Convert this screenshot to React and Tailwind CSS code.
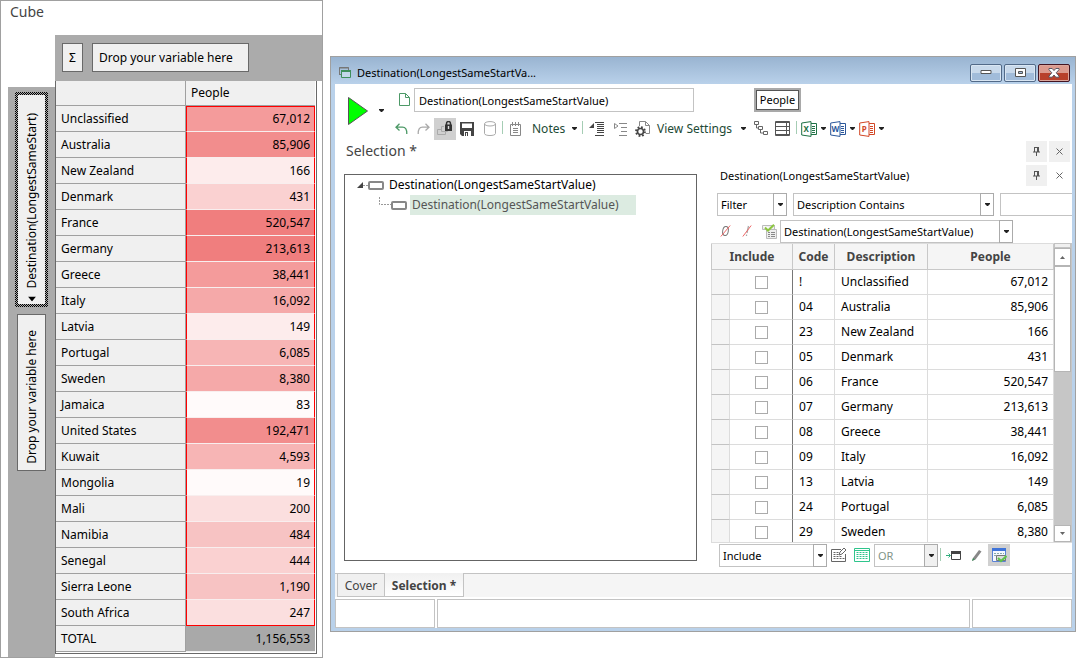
import clsx from "clsx";

const CUBE = [
  ["Unclassified", "67,012", "bg-[#f49b9b]"],
  ["Australia", "85,906", "bg-[#f28d8d]"],
  ["New Zealand", "166", "bg-[#fdecec]"],
  ["Denmark", "431", "bg-[#fad1d1]"],
  ["France", "520,547", "bg-[#f07e7e]"],
  ["Germany", "213,613", "bg-[#f07e7e]"],
  ["Greece", "38,441", "bg-[#f49b9b]"],
  ["Italy", "16,092", "bg-[#f5a9a9]"],
  ["Latvia", "149", "bg-[#fdecec]"],
  ["Portugal", "6,085", "bg-[#f7b5b5]"],
  ["Sweden", "8,380", "bg-[#f5a9a9]"],
  ["Jamaica", "83", "bg-[#fffafa]"],
  ["United States", "192,471", "bg-[#f28d8d]"],
  ["Kuwait", "4,593", "bg-[#f7b5b5]"],
  ["Mongolia", "19", "bg-[#fffafa]"],
  ["Mali", "200", "bg-[#fbdfdf]"],
  ["Namibia", "484", "bg-[#f7c3c3]"],
  ["Senegal", "444", "bg-[#fad1d1]"],
  ["Sierra Leone", "1,190", "bg-[#f7c3c3]"],
  ["South Africa", "247", "bg-[#fbdfdf]"],
];

const CODES = [
  ["!", "Unclassified", "67,012"],
  ["04", "Australia", "85,906"],
  ["23", "New Zealand", "166"],
  ["05", "Denmark", "431"],
  ["06", "France", "520,547"],
  ["07", "Germany", "213,613"],
  ["08", "Greece", "38,441"],
  ["09", "Italy", "16,092"],
  ["13", "Latvia", "149"],
  ["24", "Portugal", "6,085"],
  ["29", "Sweden", "8,380"],
];

export default function App() {
  return (
    <div className="flex min-h-screen items-start gap-[7px] bg-white font-['Noto_Sans','Open_Sans',sans-serif] text-[12px] leading-4 text-black">
      <CubePanel />
      <SelectionWindow />
    </div>
  );
}

function CubePanel() {
  return (
    <section className="flex min-h-screen w-[323px] shrink-0 flex-col border border-[#a0a0a0]">
      <h1 className="h-[34px] px-[9px] pt-px text-[14px] leading-5 text-[#444]">Cube</h1>
      <div className="flex flex-1">
        <div className="flex w-[54px] shrink-0 pt-[52px] pl-[7px]">
          <div className="flex flex-1 flex-col items-start bg-[#ababab] pt-[5px] pl-[7px]">
            <div className="bg-[repeating-conic-gradient(#000_0_25%,#ababab_0_50%)] bg-[size:2px_2px] p-[3px]">
              <button className="flex h-[209px] w-[27px] items-end justify-center bg-[#f0f0f0] pb-0.5">
                <span className="flex rotate-180 items-center gap-2 whitespace-nowrap [writing-mode:vertical-rl]">
                  <svg width="8" height="5" viewBox="0 0 8 5" aria-hidden="true"><path d="M0 5h8L4 0z" /></svg>
                  Destination(LongestSameStart)
                </span>
              </button>
            </div>
            <button className="mt-[7px] ml-0.5 flex h-[157px] w-[29px] items-end justify-center border border-[#696969] bg-[#f0f0f0] pb-[6px]">
              <span className="rotate-180 whitespace-nowrap [writing-mode:vertical-rl]">Drop your variable here</span>
            </button>
          </div>
        </div>
        <div className="flex-1">
          <div className="flex h-[46px] items-start gap-[9px] bg-[#ababab] pt-2 pl-[7px]">
            <button className="h-[29px] w-[21px] border border-[#696969] bg-[#f0f0f0]">Σ</button>
            <button className="h-[29px] w-[157px] border border-[#696969] bg-[#f0f0f0] px-[6px] text-left">Drop your variable here</button>
          </div>
          <div className="mr-[5px] border border-t-0 border-[#696969] pr-px pb-px">
            <table className="w-full table-fixed border-separate border-spacing-0">
              <thead>
                <tr className="h-[25px] bg-[#f0f0f0] text-left">
                  <th className="w-[130px] border-r border-b border-[#a0a0a0]" aria-label="Destination" />
                  <th className="border-b border-[#a0a0a0] px-[5px] font-normal">People</th>
                </tr>
              </thead>
              <tbody>
                {CUBE.map(([name, people, shade], i) => (
                  <tr key={name} className="h-[26px]">
                    <th className="border-r border-b border-[#a0a0a0] bg-[#f0f0f0] px-[5px] text-left font-normal">{name}</th>
                    <td
                      className={clsx(
                        "border-x border-b border-x-[#f00] px-1 text-right",
                        shade,
                        i === 0 && "border-t border-t-[#f00]",
                        i === CUBE.length - 1 ? "border-b-[#f00]" : "border-b-[#f8eeee]"
                      )}
                    >
                      {people}
                    </td>
                  </tr>
                ))}
                <tr className="h-[26px]">
                  <th className="border-r border-b border-[#a0a0a0] bg-[#f0f0f0] px-[5px] text-left font-normal">TOTAL</th>
                  <td className="border-b border-[#f0f0f0] bg-[#a9a9a9] px-[5px] text-right">1,156,553</td>
                </tr>
              </tbody>
            </table>
          </div>
        </div>
      </div>
    </section>
  );
}

function SelectionWindow() {
  return (
    <section className="mt-14 min-w-0 flex-1 border border-[#a0a0a0] bg-[#b9d1ea]">
      <TitleBar />
      <div className="mr-[3px] mb-[3px] ml-1 bg-white">
        <Header />
        <div className="flex h-[23px] items-start justify-between pt-px pr-0.5 pl-[11px]">
          <h2 className="text-[14px] leading-5 text-[#444]">Selection *</h2>
          <div className="flex gap-0.5">
            <PaneButton label="Pin window" filled><PinIcon /></PaneButton>
            <PaneButton label="Close window" filled><CloseIcon /></PaneButton>
          </div>
        </div>
        <div className="flex gap-[14px]">
          <Tree />
          <CodePane />
        </div>
        <nav className="flex border-t border-[#c3c3c3] bg-[#f5f5f5] pl-0.5">
          <button className="h-[23px] w-[48px] border border-t-0 border-[#c3c3c3] bg-[#f0f0f0] pt-px text-[#444]">Cover</button>
          <button className="-mt-px h-6 w-[79px] border border-t-0 border-l-0 border-[#c3c3c3] bg-linear-to-b from-[#f0f0f0] to-white pt-0.5 font-bold text-[#444]">
            Selection *
          </button>
        </nav>
        <footer className="flex gap-0.5 bg-white pt-0.5">
          <div className="h-[29px] w-[100px] border border-[#c3c3c3]" />
          <div className="h-[29px] flex-1 border border-[#c3c3c3]" />
          <div className="h-[29px] w-[100px] border border-[#c3c3c3]" />
        </footer>
      </div>
    </section>
  );
}

function TitleBar() {
  return (
    <header className="flex h-[27px] items-center bg-linear-to-b from-[#99b4d1] to-[#b9d1ea] pt-1 pr-[5px] pl-2">
      <svg width="12" height="11" viewBox="0 0 12 11" fill="none" aria-hidden="true">
        <path d="M.5 7V.5h9V3" stroke="#777" />
        <path d="M0 1h10M0 7.500h2" stroke="#777" />
        <path d="M2.500 3.500h9v7h-9z" stroke="#3f8f5c" fill="#c3d7ea" />
        <path d="M2 4h10" stroke="#3f8f5c" strokeWidth="2" />
      </svg>
      <span className="ml-[6px] flex-1 text-[11px] leading-4">Destination(LongestSameStartVa...</span>
      <div className="flex gap-0.5">
        <button aria-label="Minimize" className="flex h-[18px] w-8 items-center justify-center rounded-[2px] border border-[#526a88] bg-linear-to-b from-[#c8d9eb] from-50% to-[#a1bcda] to-50% shadow-[inset_0_0_0_1px_#d9e6f3]">
          <svg width="12" height="5" viewBox="0 0 12 5"><path d="M1 .5h10v3H1z" fill="#fff" stroke="#555" /></svg>
        </button>
        <button aria-label="Maximize" className="flex h-[18px] w-8 items-center justify-center rounded-[2px] border border-[#526a88] bg-linear-to-b from-[#c8d9eb] from-50% to-[#a1bcda] to-50% shadow-[inset_0_0_0_1px_#d9e6f3]">
          <svg width="11" height="9" viewBox="0 0 11 9" fill="#fff" stroke="#555"><path d="M.5.5h10v8H.5z" /><path d="M3.500 3.500h4v2h-4z" fill="#a1bcda" /></svg>
        </button>
        <button aria-label="Close" className="flex h-[18px] w-8 items-center justify-center rounded-[2px] border border-[#431422] bg-linear-to-b from-[#dc9a8e] from-50% to-[#b8402b] to-50% shadow-[inset_0_0_0_1px_#dba69c]">
          <svg width="12" height="10" viewBox="0 0 12 10">
            <path d="M1 .5h3.200L6 2.600 7.800.5H11v1.200L8.200 4.800 11 8.100v1.100H7.800L6 7 4.200 9.200H1V8.100l2.800-3.300L1 1.700z" fill="#fff" stroke="#4d4d5a" strokeWidth=".9" />
          </svg>
        </button>
      </div>
    </header>
  );
}

function Header() {
  return (
    <div className="flex pt-1">
      <button aria-label="Build" className="flex w-[55px] items-start gap-[10px] pt-2 pl-3">
        <svg width="22" height="30" viewBox="0 0 22 30"><path d="M1.500 1.500v27L20.500 15z" fill="#0f0" stroke="#555" /></svg>
        <span className="pt-[13px]"><Caret /></span>
      </button>
      <div className="min-w-0 flex-1">
        <div className="flex items-start pl-[9px]">
          <svg className="mt-[5px]" width="11" height="13" viewBox="0 0 11 13" fill="none" stroke="#4d9967" aria-hidden="true">
            <path d="M.5.5h6l4 4v8H.5zM6.500.5v4h4" />
          </svg>
          <input
            aria-label="Selection name"
            className="ml-1 h-6 w-[280px] border border-[#c3c3c3] px-1 text-[11px] leading-4"
            defaultValue="Destination(LongestSameStartValue)"
          />
          <div className="ml-[60px] border-2 border-[#a9a9a9]">
            <button className="h-[20px] w-[43px] border border-[#555] bg-white text-[11px] leading-4">People</button>
          </div>
        </div>
        <Toolbar />
      </div>
    </div>
  );
}

function Toolbar() {
  return (
    <div className="mt-[5px] flex h-[23px] items-center text-[#1d4a36]">
      <Tool label="Undo" className="w-[22px]">
        <svg width="13" height="12" viewBox="0 0 13 12" fill="none" stroke="#4d9967" strokeWidth="1.300"><path d="M4.500.8L1 4.200l3.500 3.300M1 4.200h6.500c3 0 4.500 2.300 4.300 6.800" /></svg>
      </Tool>
      <Tool label="Redo" className="w-[22px]">
        <svg width="13" height="12" viewBox="0 0 13 12" fill="none" stroke="#aaa" strokeWidth="1.300"><path d="M8.500.8L12 4.200 8.500 7.500M12 4.200H5.500c-3 0-4.500 2.300-4.300 6.800" /></svg>
      </Tool>
      <Tool label="Lock" className="w-[22px] bg-[#d0d0d0]">
        <svg width="16" height="15" viewBox="0 0 16 15" fill="none">
          <path d="M7 5.500H4.500v5h6V10M4 8.500H.5v5h8V11" stroke="#aaa" />
          <path d="M8 3.500h7V10H8z" fill="#333" />
          <path d="M9.500 4V2.500a2 2 0 0 1 4 0V4" stroke="#333" strokeWidth="1.500" />
          <path d="M11.500 5v3" stroke="#ddd" strokeWidth="1.400" />
        </svg>
      </Tool>
      <Tool label="Save" className="w-[22px]">
        <svg width="14" height="14" viewBox="0 0 14 14"><path d="M0 0h14v14H2l-2-2z" fill="#444" /><path d="M2 1.500h10V6H2zM4 9h7v5H4z" fill="#fff" /><path d="M5 10h3v4H5z" fill="#444" /><path d="M6.500 11v3" stroke="#fff" /></svg>
      </Tool>
      <Tool label="Database" className="w-6">
        <svg width="12" height="15" viewBox="0 0 12 15" fill="none" stroke="#aaa"><path d="M.5 3v9.500c0 2.700 11 2.700 11 0V3" /><ellipse cx="6" cy="2.800" rx="5.500" ry="2.200" /></svg>
      </Tool>
      <Separator />
      <Tool label="Notes list" className="w-6">
        <svg width="11" height="14" viewBox="0 0 11 14" fill="none" stroke="#888"><path d="M.5 2.500h10v11H.5zM2.500 0v4M5.500 0v4M8.500 0v4M3 6.500h5M3 8.500h5M3 10.500h5" /></svg>
      </Tool>
      <button className="flex h-5 w-[55px] items-center justify-between px-[5px]">Notes <Caret /></button>
      <Separator />
      <Tool label="Outdent" className="w-[26px]">
        <svg width="15" height="14" viewBox="0 0 15 14" fill="none" stroke="#444"><path d="M5 1v5H0z" fill="#444" stroke="none" /><path d="M6 .5h9M8 2.500h7M8 4.500h7M8 6.500h7M8 8.500h7M8 10.500h7M6 13.500h9" /></svg>
      </Tool>
      <Tool label="Indent" className="w-[22px]">
        <svg width="13" height="14" viewBox="0 0 13 14" fill="none" stroke="#888"><path d="M.5 1.500L4 4 .5 6.500zM5 1.500h8M7 5.500h6M7 9.500h6M5 13.500h8" /></svg>
      </Tool>
      <Tool label="Properties" className="w-[22px]">
        <svg width="15" height="16" viewBox="0 0 15 16" fill="none">
          <path d="M4.500 5V.5h6l4 4v8H11M10.500.5v4h4" stroke="#888" />
          <circle cx="5.500" cy="10.500" r="3" stroke="#444" strokeWidth="1.600" />
          <circle cx="5.500" cy="10.500" r="4.500" stroke="#444" strokeWidth="1.800" strokeDasharray="1.770 1.770" />
        </svg>
      </Tool>
      <button className="flex h-5 w-[97px] items-center justify-between px-1">View Settings <Caret /></button>
      <Tool label="Hierarchy" className="w-[21px]">
        <svg width="14" height="15" viewBox="0 0 14 15" fill="none" stroke="#666"><path d="M.5.500h4v3h-4zM4.500 5.500h4v3h-4zM9.500 10.500h4v3h-4zM2.500 4v3H4M6.500 9v3H9" /></svg>
      </Tool>
      <Tool label="Table view" className="w-[22px]">
        <svg width="15" height="15" viewBox="0 0 15 15" fill="none" stroke="#555"><path d="M.5.5h14v14H.5zM0 1.500h15M0 5.500h15M0 9.500h15M0 13.500h15M11.500 0v15" /></svg>
      </Tool>
      <span className="mr-0.5 ml-[3px]"><Separator /></span>
      <OfficeButton label="Export to Excel" letter="X" color="#1e7145" />
      <OfficeButton label="Export to Word" letter="W" color="#2b579a" />
      <OfficeButton label="Export to PowerPoint" letter="P" color="#d24726" />
    </div>
  );
}

function Tool({ label, className, children }) {
  return (
    <button aria-label={label} className={clsx("flex h-[22px] shrink-0 items-center justify-center", className)}>
      {children}
    </button>
  );
}

function OfficeButton({ label, letter, color }) {
  return (
    <button aria-label={label} className="flex h-[22px] w-[29px] items-center gap-1 pl-0.5">
      <svg width="16" height="16" viewBox="0 0 16 16" fill="none" stroke={color}>
        <path d="M.7 2L10 .6v14.800L.7 14z" fill="#fff" />
        <path d="M10 2.500h5.500v11H10" />
        <path d="M11 5.500h3M11 7.500h3M11 9.500h3M11 11.500h3" />
        <text x="5.300" y="11" textAnchor="middle" fontSize="8" fontWeight="700" fill={color} stroke="none">{letter}</text>
      </svg>
      <Caret />
    </button>
  );
}

function Separator() {
  return <span className="mb-[3px] block h-[13px] w-px shrink-0 bg-[#a5cdb4]" />;
}

function Caret() {
  return (
    <svg width="5" height="3" viewBox="0 0 5 3" fill="#222" aria-hidden="true"><path d="M0 0h5v1L3 3H2L0 1z" /></svg>
  );
}

function PaneButton({ label, filled, children }) {
  return (
    <button aria-label={label} className={clsx("flex h-[21px] w-[21px] items-center justify-center", filled && "bg-[#f0f0f0]")}>
      {children}
    </button>
  );
}

function PinIcon() {
  return (
    <svg width="7" height="9" viewBox="0 0 7 9" fill="none" stroke="#555"><path d="M1 .5h5M1.500 0v5M4.500 0v5M5.500 0v5M0 5h7M3.500 5v4" /></svg>
  );
}

function CloseIcon() {
  return (
    <svg width="7" height="7" viewBox="0 0 7 7" fill="none" stroke="#666"><path d="M.5.5l6 6M6.500.5l-6 6" /></svg>
  );
}

function Tree() {
  return (
    <div className="flex min-w-0 flex-1 pt-[11px] pb-3 pl-[9px]">
      <ul className="flex-1 border border-[#646464] pl-[11px]">
        <li className="flex h-5 items-center">
          <svg width="28" height="9" viewBox="0 0 28 9" fill="none" aria-hidden="true">
            <path d="M7 1v6H1z" fill="#444" />
            <path d="M7 4.500h5" stroke="#999" strokeDasharray="2 1" />
            <rect x="13" y="1" width="14" height="7" rx="1" stroke="#888" strokeWidth="2" />
          </svg>
          <span className="pl-[5px]">Destination(LongestSameStartValue)</span>
        </li>
        <li className="flex h-5 items-center pl-[22px]">
          <svg width="30" height="16" viewBox="0 0 30 16" fill="none" aria-hidden="true">
            <path d="M1.500 0v7.500H13" stroke="#999" strokeDasharray="2 1" />
            <rect x="14" y="5" width="14" height="7" rx="1" stroke="#888" strokeWidth="2" />
          </svg>
          <span className="ml-0.5 h-5 w-[226px] bg-[#dcebe1] px-0.5 leading-5 text-[#555]">Destination(LongestSameStartValue)</span>
        </li>
      </ul>
    </div>
  );
}

function Dropdown({ label, value, className, disabled }) {
  return (
    <div className={clsx("relative h-6 shrink-0", className)}>
      <select
        aria-label={label}
        disabled={disabled}
        className="block h-[23px] w-full appearance-none border border-[#c3c3c3] bg-white px-[3px] text-[11px] leading-4 text-black disabled:text-[#7f9488] disabled:opacity-100"
      >
        <option>{value}</option>
      </select>
      <span
        className={clsx(
          "pointer-events-none absolute top-0 right-0 flex h-[23px] w-[14px] items-center justify-center border border-[#ababab]",
          disabled ? "bg-[#f0f0f0]" : "bg-white"
        )}
      >
        <Caret />
      </span>
    </div>
  );
}

function CodePane() {
  return (
    <div className="w-[361px] shrink-0 overflow-hidden pt-0.5">
      <div className="flex h-[21px] items-center justify-between pr-0.5 pl-[9px]">
        <h3 className="text-[11px] leading-4">Destination(LongestSameStartValue)</h3>
        <div className="flex gap-0.5">
          <PaneButton label="Pin pane" filled><PinIcon /></PaneButton>
          <PaneButton label="Close pane"><CloseIcon /></PaneButton>
        </div>
      </div>
      <div className="mt-[7px] flex gap-[6px] pl-[6px]">
        <Dropdown label="Filter mode" value="Filter" className="w-[70px]" />
        <Dropdown label="Filter field" value="Description Contains" className="w-[201px]" />
        <input aria-label="Filter text" className="h-[23px] min-w-0 flex-1 border border-r-0 border-[#c3c3c3] px-1 text-[11px]" />
      </div>
      <div className="mt-[3px] flex items-start pl-[3px]">
        <Tool label="Hide zero counts" className="w-[22px]">
          <svg width="11" height="12" viewBox="0 0 11 12" fill="none"><ellipse cx="5.500" cy="6" rx="2.800" ry="4.500" stroke="#777" transform="rotate(10 5.500 6)" /><path d="M.8 11.500L10.200.5" stroke="#e66" /></svg>
        </Tool>
        <Tool label="Hide unclassified" className="w-[22px]">
          <svg width="10" height="12" viewBox="0 0 10 12" fill="none"><path d="M6.500 1L5 8M4.500 9.500v1.500" stroke="#aaa" strokeWidth="1.300" /><path d="M.8 11.500L9.200.5" stroke="#e66" /></svg>
        </Tool>
        <Tool label="Select matching" className="w-[22px]">
          <svg width="15" height="15" viewBox="0 0 15 15" fill="none"><path d="M.5 1.500h12v4M.5 1.500v4h4M4.500 5.500h10v9h-10z" fill="#eee" stroke="#bbb" /><path d="M6 8.500h2M9 8.500h4M6 10.500h2M9 10.500h4M6 12.500h2M9 12.500h4" stroke="#888" /><path d="M3 3.500l3 3L12 .8" stroke="#8cc63f" strokeWidth="2" /></svg>
        </Tool>
        <Dropdown label="Variable" value="Destination(LongestSameStartValue)" className="w-[233px]" />
      </div>
      <div className="-mt-px flex h-[300px] border-b border-[#dcdcdc]">
        <div className="min-w-0 flex-1 overflow-hidden border-t border-[#dcdcdc]">
          <table className="w-full table-fixed border-separate border-spacing-0">
            <colgroup>
              <col className="w-[19px]" />
              <col className="w-[63px]" />
              <col className="w-[42px]" />
              <col className="w-[93px]" />
              <col />
            </colgroup>
            <thead>
              <tr className="h-[26px] bg-[#f5f5f5] text-[#444]">
                <th colSpan={2} className="border-r border-b border-l border-[#c8c8c8]">Include</th>
                <th className="border-r border-b border-[#c8c8c8]">Code</th>
                <th className="border-r border-b border-[#c8c8c8]">Description</th>
                <th className="border-r border-b border-[#c8c8c8]">People</th>
              </tr>
            </thead>
            <tbody>
              {CODES.map(([code, name, people]) => (
                <tr key={code} className="h-[25px]">
                  <td className="border-r border-b border-l border-[#dcdcdc] border-b-[#c3c3c3] bg-[#f5f5f5]" />
                  <td className="border-r border-b border-r-[#777] border-b-[#dcdcdc]">
                    <input
                      type="checkbox"
                      aria-label={"Include " + name}
                      className="mx-auto block h-[13px] w-[13px] appearance-none border border-[#ababab] bg-white"
                    />
                  </td>
                  <td className="border-r border-b border-[#dcdcdc] px-[6px]">{code}</td>
                  <td className="border-r border-b border-[#dcdcdc] px-[6px]">{name}</td>
                  <td className="border-r border-b border-[#dcdcdc] px-[5px] text-right">{people}</td>
                </tr>
              ))}
            </tbody>
          </table>
        </div>
        <Scrollbar />
      </div>
      <div className="flex h-[30px] items-start pt-px pl-2">
        <Dropdown label="Include mode" value="Include" className="w-[108px]" />
        <Tool label="Edit grid" className="w-[23px]">
          <svg width="16" height="16" viewBox="0 0 16 16" fill="none" stroke="#666"><path d="M10 2.500H.5v12h14V7" /><path d="M2.500 5.500h2M5.500 5.500h2M2.500 7.500h2M5.500 7.500h2M2.500 9.500h2M5.500 9.500h2M8.500 9.500h2M2.500 11.500h2M5.500 11.500h2M8.500 11.500h2M11.500 11.500h2" /><path d="M8 8l1-3 4-4 2 2-4 4z" fill="#fff" /></svg>
        </Tool>
        <Tool label="Grid columns" className="w-6">
          <svg width="16" height="14" viewBox="0 0 16 14" fill="none" stroke="#2fc58c"><path d="M.5.500h15v13H.5zM1 2.500h14" /><path d="M2.500 4.500h2M5.500 4.500h2M8.500 4.500h2M11.500 4.500h2M2.500 6.500h2M5.500 6.500h2M8.500 6.500h2M11.500 6.500h2M2.500 8.500h2M5.500 8.500h2M8.500 8.500h2M11.500 8.500h2M2.500 10.500h2M5.500 10.500h2M8.500 10.500h2M11.500 10.500h2" /></svg>
        </Tool>
        <Dropdown label="Operator" value="OR" className="w-[64px]" disabled />
        <span className="mt-1 ml-[2px]"><Separator /></span>
        <Tool label="Send to window" className="w-[25px]">
          <svg width="15" height="9" viewBox="0 0 15 9" fill="none"><path d="M0 4.500h4M2.500 2.500l2 2-2 2" stroke="#2fae7c" /><path d="M5.500 1v7.500h9V1" stroke="#444" /><path d="M5 1.500h10" stroke="#444" strokeWidth="3" /></svg>
        </Tool>
        <Tool label="Edit" className="w-[22px]">
          <svg width="10" height="11" viewBox="0 0 10 11"><path d="M0 11l1-3 6-8 2.500 1.500-6 8z" fill="#888" /><path d="M0 11l1-3 1.800 1.500z" fill="#3f8f5c" /></svg>
        </Tool>
        <Tool label="Auto select" className="w-[22px] bg-[#d0d0d0]">
          <svg width="15" height="15" viewBox="0 0 15 15" fill="none"><path d="M.5.500h13v13H.5z" fill="#f4f8ff" stroke="#5b83d6" /><path d="M0 0h14v3H0z" fill="#3f74d9" /><path d="M2 5.500h10M2 7.500h3" stroke="#8aa" strokeDasharray="2 1" /><path d="M4.500 7.500h9v5h-9z" fill="#ddd" stroke="#777" /><path d="M6 10l3 3 5.500-5" stroke="#5cc44a" strokeWidth="2" /></svg>
        </Tool>
      </div>
    </div>
  );
}

function Scrollbar() {
  return (
    <div className="flex w-[18px] shrink-0 flex-col bg-[#c6c6c6] pr-px">
      <div className="h-[5px] border border-[#c3c3c3] bg-[#f0f0f0]" />
      <button aria-label="Scroll up" className="flex h-[18px] items-center justify-center border border-[#b5b5b5] bg-white">
        <svg width="5" height="3" viewBox="0 0 5 3" fill="#666"><path d="M0 3h5L2.500 0z" /></svg>
      </button>
      <div className="h-[106px] border border-[#b5b5b5] bg-white" />
      <div className="flex-1" />
      <button aria-label="Scroll down" className="flex h-[17px] items-center justify-center border border-[#b5b5b5] bg-white">
        <svg width="5" height="3" viewBox="0 0 5 3" fill="#666"><path d="M0 0h5L2.500 3z" /></svg>
      </button>
    </div>
  );
}
